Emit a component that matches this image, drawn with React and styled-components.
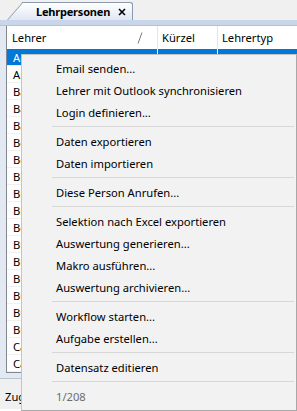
import styled, { createGlobalStyle } from "styled-components"

const GlobalStyle = createGlobalStyle`
  body {
    margin: 0;
    font-family: "Noto Sans", "Open Sans", sans-serif;
    font-size: 11.2px;
  }
  * { box-sizing: border-box; }
`

const teachers = [
  "Aebischer Markus", "Amrein Sandra", "Bachmann Peter", "Baumann Ursula",
  "Baumgartner Lukas", "Beck Martina", "Berger Thomas", "Bieri Anna",
  "Bischof Daniel", "Blaser Monika", "Bolliger Reto", "Brand Silvia",
  "Brunner Stefan", "Bucher Claudia", "Bühler Markus", "Burkhalter Eva",
  "Bürgi Hans", "Caduff Rita", "Camenzind Paul",
]

const menuItems = [
  "Email senden...",
  "Lehrer mit Outlook synchronisieren",
  "Login definieren...",
  "-",
  "Daten exportieren",
  "Daten importieren",
  "-",
  "Diese Person Anrufen...",
  "-",
  "Selektion nach Excel exportieren",
  "Auswertung generieren...",
  "Makro ausführen...",
  "Auswertung archivieren...",
  "-",
  "Workflow starten...",
  "Aufgabe erstellen...",
  "-",
  "Datensatz editieren",
  "-",
]

function App() {
  return (
    <Window>
      <GlobalStyle />
      <TabStrip>
        <Tab>
          <TabTitle>Lehrpersonen</TabTitle>
          <Close width="8" height="8" viewBox="0 0 8 8">
            <path d="M1 1 L7 7 M7 1 L1 7" stroke="#000" strokeWidth="1.6" />
          </Close>
        </Tab>
      </TabStrip>
      <Band />
      <Panel>
        <Grid>
          <Header>
            <HeadCell>
              Lehrer
              <SortMark width="6" height="12" viewBox="0 0 6 12">
                <line x1="5" y1="0.5" x2="1" y2="11.5" stroke="#7a7a7a" strokeWidth="1" />
              </SortMark>
            </HeadCell>
            <HeadCell>Kürzel</HeadCell>
            <HeadCell>Lehrertyp</HeadCell>
          </Header>
          {teachers.map((name, i) => (
            <Row key={name} $selected={i === 0}>
              <Cell>{name}</Cell>
              <Cell />
              <Cell />
            </Row>
          ))}
        </Grid>
      </Panel>
      <BottomBar>Zugehörigkeiten</BottomBar>

      <Menu>
        {menuItems.map((item, i) =>
          item === "-" ? <Separator key={i} /> : <MenuItem key={i}>{item}</MenuItem>
        )}
        <MenuItem $disabled>1/208</MenuItem>
      </Menu>
    </Window>
  )
}

export default App

const Window = styled.div`
  position: relative;
  width: 297px;
  height: 411px;
  overflow: hidden;
  display: flex;
  flex-direction: column;
  background: #f0f0f0;
  color: #000;
`

const TabStrip = styled.div`
  height: 20px;
  flex-shrink: 0;
  display: flex;
  align-items: flex-end;
  padding-left: 22px;
`

const Tab = styled.div`
  position: relative;
  isolation: isolate;
  height: 18px;
  width: 111px;
  display: flex;
  align-items: center;
  justify-content: space-between;
  padding: 0 6px 0 14px;
  border-top: 1px solid #8c99ad;
  border-right: 1px solid #8c99ad;
  border-top-right-radius: 3px;
  background: linear-gradient(#ffffff, #dfe7f4);
  &::before {
    content: "";
    position: absolute;
    left: -15px;
    top: -1px;
    bottom: 0;
    width: 22px;
    z-index: -1;
    background: linear-gradient(#ffffff, #dfe7f4);
    border-left: 1px solid #8c99ad;
    border-top: 1px solid #8c99ad;
    transform: skewX(-41deg);
    transform-origin: bottom left;
  }
`

const TabTitle = styled.span`
  font-weight: bold;
  font-size: 11px;
  letter-spacing: -0.2px;
  white-space: nowrap;
`

const Close = styled.svg`
  display: block;
  flex-shrink: 0;
`

const Band = styled.div`
  height: 6px;
  flex-shrink: 0;
  background: #c9d6ea;
  border-bottom: 1px solid #b4c1d6;
`

const Panel = styled.div`
  display: flex;
  flex-direction: column;
  padding: 0 0 5px 6px;
  background: #e3e9f2;
`

const Grid = styled.div`
  background: #fff;
  border-left: 1px solid #828790;
  border-bottom: 1px solid #828790;
`

const columns = `
  display: grid;
  grid-template-columns: 151px 60px 1fr;
`

const Header = styled.div`
  ${columns}
  height: 23px;
`

const HeadCell = styled.div`
  display: flex;
  align-items: center;
  justify-content: space-between;
  padding: 0 14px 0 5px;
  border-right: 1px solid #e5e5e5;
  &:nth-child(n + 2) {
    padding-left: 4px;
  }
  &:last-child {
    border-right: none;
  }
`

const SortMark = styled.svg`
  display: block;
`

const Row = styled.div`
  ${columns}
  height: 17px;
  border-bottom: 1px solid #f0f0f0;
  background: ${(p) => (p.$selected ? "#0078d7" : "#fff")};
  color: ${(p) => (p.$selected ? "#fff" : "#000")};
  & > div {
    border-right-color: ${(p) => (p.$selected ? "#fff" : "#f0f0f0")};
  }
`

const Cell = styled.div`
  display: flex;
  align-items: center;
  padding-left: 6px;
  white-space: nowrap;
  overflow: hidden;
  border-right: 1px solid #f0f0f0;
  &:last-child {
    border-right: none;
  }
`

const BottomBar = styled.div`
  flex: 1;
  display: flex;
  align-items: center;
  padding: 5px 0 0 5px;
  border-top: 1px solid #b9c3d2;
  border-bottom: 2px solid #fff;
  background: #f0f0f0;
`

const Menu = styled.div`
  position: absolute;
  left: 21px;
  top: 54px;
  width: 276px;
  height: 357px;
  padding: 2px 0;
  background: #f2f2f2;
  border: 1px solid #c4c4c4;
  border-right-color: #a8a8a8;
  border-bottom-color: #a8a8a8;
`

const MenuItem = styled.div`
  height: 22px;
  display: flex;
  align-items: center;
  padding-left: 34px;
  white-space: nowrap;
  color: ${(p) => (p.$disabled ? "#6d6d6d" : "#000")};
`

const Separator = styled.div`
  height: 7px;
  display: flex;
  align-items: center;
  &::after {
    content: "";
    flex: 1;
    height: 1px;
    margin: 0 2px 0 30px;
    background: #d7d7d7;
  }
`
